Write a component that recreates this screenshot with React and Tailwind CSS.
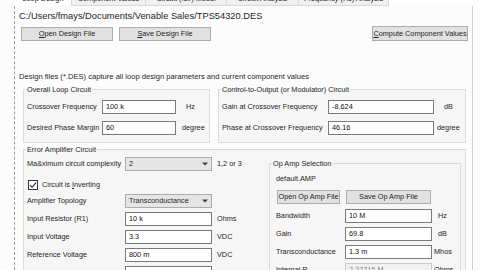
import React from 'react'

const tabs = [
    { label: "Loop Design", w: "w-[57px]", active: true },
    { label: "Component Values", w: "w-[74px]" },
    { label: "Circuit (.cir) Model", w: "w-[81px]" },
    { label: "Circuit Analysis", w: "w-[72px]" },
    { label: "Frequency (Hz) Analysis", w: "w-[90px]" },
]

function Button({ children, className = "" }) {
    return (
        <div className={`flex items-center justify-center bg-[#e1e1e1] border border-[#adadad] leading-[10px] ${className}`}>
            {children}
        </div>
    )
}

function Field({ value, className = "", disabled }) {
    return (
        <div className={`h-[14px] flex items-center px-[3px] border leading-[10px] ${disabled ? "bg-[#f0f0f0] border-[#cccccc] text-[#8a8a8a]" : "bg-white border-[#7a7a7a] text-[#111]"} ${className}`}>
            {value}
        </div>
    )
}

function Select({ value }) {
    return (
        <div className='w-[87px] h-[14px] flex items-center justify-between pl-[3px] pr-[3px] bg-[#e5e5e5] border border-[#acacac] leading-[10px]'>
            <span>{value}</span>
            <svg width="6" height="4" viewBox="0 0 6 4"><path d="M0 0.5 L6 0.5 L3 3.5 Z" fill="#404040" /></svg>
        </div>
    )
}

function Group({ title, className = "", inner = "", children }) {
    return (
        <fieldset className={`border border-[#dcdcdc] bg-[#f6f6f6] ${className}`}>
            <legend className='ml-[2px] px-[1px] leading-[9px]'>{title}</legend>
            <div className={inner}>{children}</div>
        </fieldset>
    )
}

function Row({ label, labelW, children, className = "" }) {
    return (
        <div className={`flex items-center leading-[10px] ${className}`}>
            <div className={labelW}>{label}</div>
            {children}
        </div>
    )
}

export default function App() {
    return (
        <div className='w-[480px] h-[270px] overflow-hidden bg-[#fcfcfc] text-[#1e1e1e] text-[7.3px] flex' style={{ fontFamily: '"Liberation Sans", Arial, sans-serif' }}>
            <div className='w-[15px] shrink-0 border-r border-dashed border-[#9a9a9a] mt-[6px]' />

            <div className='w-[458px] shrink-0 flex flex-col'>
                <div className='flex h-[6px] bg-white'>
                    {tabs.map(t => (
                        <div key={t.label} className={`${t.w} shrink-0 h-[6px] overflow-hidden text-center border-r border-[#d9d9d9] ${t.active ? "bg-white" : "bg-[#f0f0f0] border-b"}`}>
                            <div className='mt-[-6px] leading-[9px] whitespace-nowrap'>{t.label}</div>
                        </div>
                    ))}
                </div>

                <div className='flex-1 border-r border-[#d0d0d0] bg-[#fcfcfc] flex flex-col'>
                    <div className='mt-[4px] ml-[4px] text-[9.3px] leading-[12px]'>C:/Users/fmays/Documents/Venable Sales/TPS54320.DES</div>

                    <div className='mt-[4px] flex items-end'>
                        <Button className='ml-[6px] w-[92px] h-[14px]'><span><u>O</u>pen Design File</span></Button>
                        <Button className='ml-[6px] w-[92px] h-[14px]'><span><u>S</u>ave Design File</span></Button>
                        <Button className='ml-auto mr-[4px] w-[96px] h-[15px] border-[#8c8c8c]'><span><u>C</u>ompute Component Values</span></Button>
                    </div>

                    <div className='mt-[31px] ml-[4px] text-[7.6px] leading-[10px]'>Design files (*.DES) capture all loop design parameters and current component values</div>

                    <div className='mt-[3px] flex'>
                        <Group title="Overall Loop Circuit" className='ml-[8px] w-[187px]' inner='pl-[3px] pb-[7px]'>
                            <Row label="Crossover Frequency" labelW='w-[75px]' className='mt-[6px]'>
                                <Field value="100 k" className='w-[74px]' />
                                <span className='ml-[10px]'>Hz</span>
                            </Row>
                            <Row label="Desired Phase Margin" labelW='w-[75px]' className='mt-[7px]'>
                                <Field value="60" className='w-[74px]' />
                                <span className='ml-[6px]'>degree</span>
                            </Row>
                        </Group>

                        <Group title="Control-to-Output (or Modulator) Circuit" className='ml-[8px] w-[248px]' inner='pl-[3px] pb-[7px]'>
                            <Row label="Gain at Crossover Frequency" labelW='w-[106px]' className='mt-[6px]'>
                                <Field value="-8.624" className='w-[106px]' />
                                <span className='ml-[10px]'>dB</span>
                            </Row>
                            <Row label="Phase at Crossover Frequency" labelW='w-[106px]' className='mt-[7px]'>
                                <Field value="46.16" className='w-[106px]' />
                                <span className='ml-[3px]'>degree</span>
                            </Row>
                        </Group>
                    </div>

                    <Group title="Error Amplifier Circuit" className='mt-[2px] ml-[8px] w-[443px] flex-1' inner='pl-[3px]'>
                        <div className='flex items-start'>
                            <div className='w-[242px] shrink-0'>
                                <Row label="Ma&ximum circuit complexity" labelW='w-[98px]' className='mt-[3px]'>
                                    <Select value="2" />
                                    <span className='ml-[5px]'>1,2 or 3</span>
                                </Row>
                                <div className='mt-[8px] h-[11px] flex items-center leading-[10px]'>
                                    <div className='ml-[1px] w-[10px] h-[10px] bg-white border border-[#333] flex items-center justify-center'>
                                        <svg width="8" height="8" viewBox="0 0 8 8"><path d="M1 4.2 L3.1 6.3 L7 1.6" fill="none" stroke="#222" strokeWidth="1.1" /></svg>
                                    </div>
                                    <span className='ml-[4px]'>Circuit is <u>I</u>nverting</span>
                                </div>
                                <Row label="Amplifier Topology" labelW='w-[98px]' className='mt-[4px]'>
                                    <Select value="Transconductance" />
                                </Row>
                                <Row label="Input Resistor (R1)" labelW='w-[98px]' className='mt-[4px]'>
                                    <Field value="10 k" className='w-[87px]' />
                                    <span className='ml-[5px]'>Ohms</span>
                                </Row>
                                <Row label="Input Voltage" labelW='w-[98px]' className='mt-[4px]'>
                                    <Field value="3.3" className='w-[87px]' />
                                    <span className='ml-[5px]'>VDC</span>
                                </Row>
                                <Row label="Reference Voltage" labelW='w-[98px]' className='mt-[4px]'>
                                    <Field value="800 m" className='w-[87px]' />
                                    <span className='ml-[5px]'>VDC</span>
                                </Row>
                                <Row label="Output Voltage" labelW='w-[98px]' className='mt-[4px]'>
                                    <Field value="3.3" className='w-[87px]' />
                                    <span className='ml-[5px]'>VDC</span>
                                </Row>
                            </div>

                            <Group title="Op Amp Selection" className='mt-[5px] w-[192px]' inner='pl-[6px] pb-[10px]'>
                                <div className='mt-[6px] leading-[10px]'>default.AMP</div>
                                <div className='mt-[6px] flex'>
                                    <Button className='ml-[1px] w-[63px] h-[14px]'>Open Op Amp File</Button>
                                    <Button className='ml-[6px] w-[85px] h-[14px]'>Save Op Amp File</Button>
                                </div>
                                <Row label="Bandwidth" labelW='w-[69px]' className='mt-[5px]'>
                                    <Field value="10 M" className='w-[87px]' />
                                    <span className='ml-[6px]'>Hz</span>
                                </Row>
                                <Row label="Gain" labelW='w-[69px]' className='mt-[4px]'>
                                    <Field value="69.8" className='w-[87px]' />
                                    <span className='ml-[6px]'>dB</span>
                                </Row>
                                <Row label="Transconductance" labelW='w-[69px]' className='mt-[4px]'>
                                    <Field value="1.3 m" className='w-[87px]' />
                                    <span className='ml-[2px]'>Mhos</span>
                                </Row>
                                <Row label="Internal R" labelW='w-[69px]' className='mt-[4px]'>
                                    <Field value="2.27715 M" className='w-[87px]' disabled />
                                    <span className='ml-[2px]'>Ohms</span>
                                </Row>
                            </Group>
                        </div>
                    </Group>
                </div>
            </div>
        </div>
    )
}
